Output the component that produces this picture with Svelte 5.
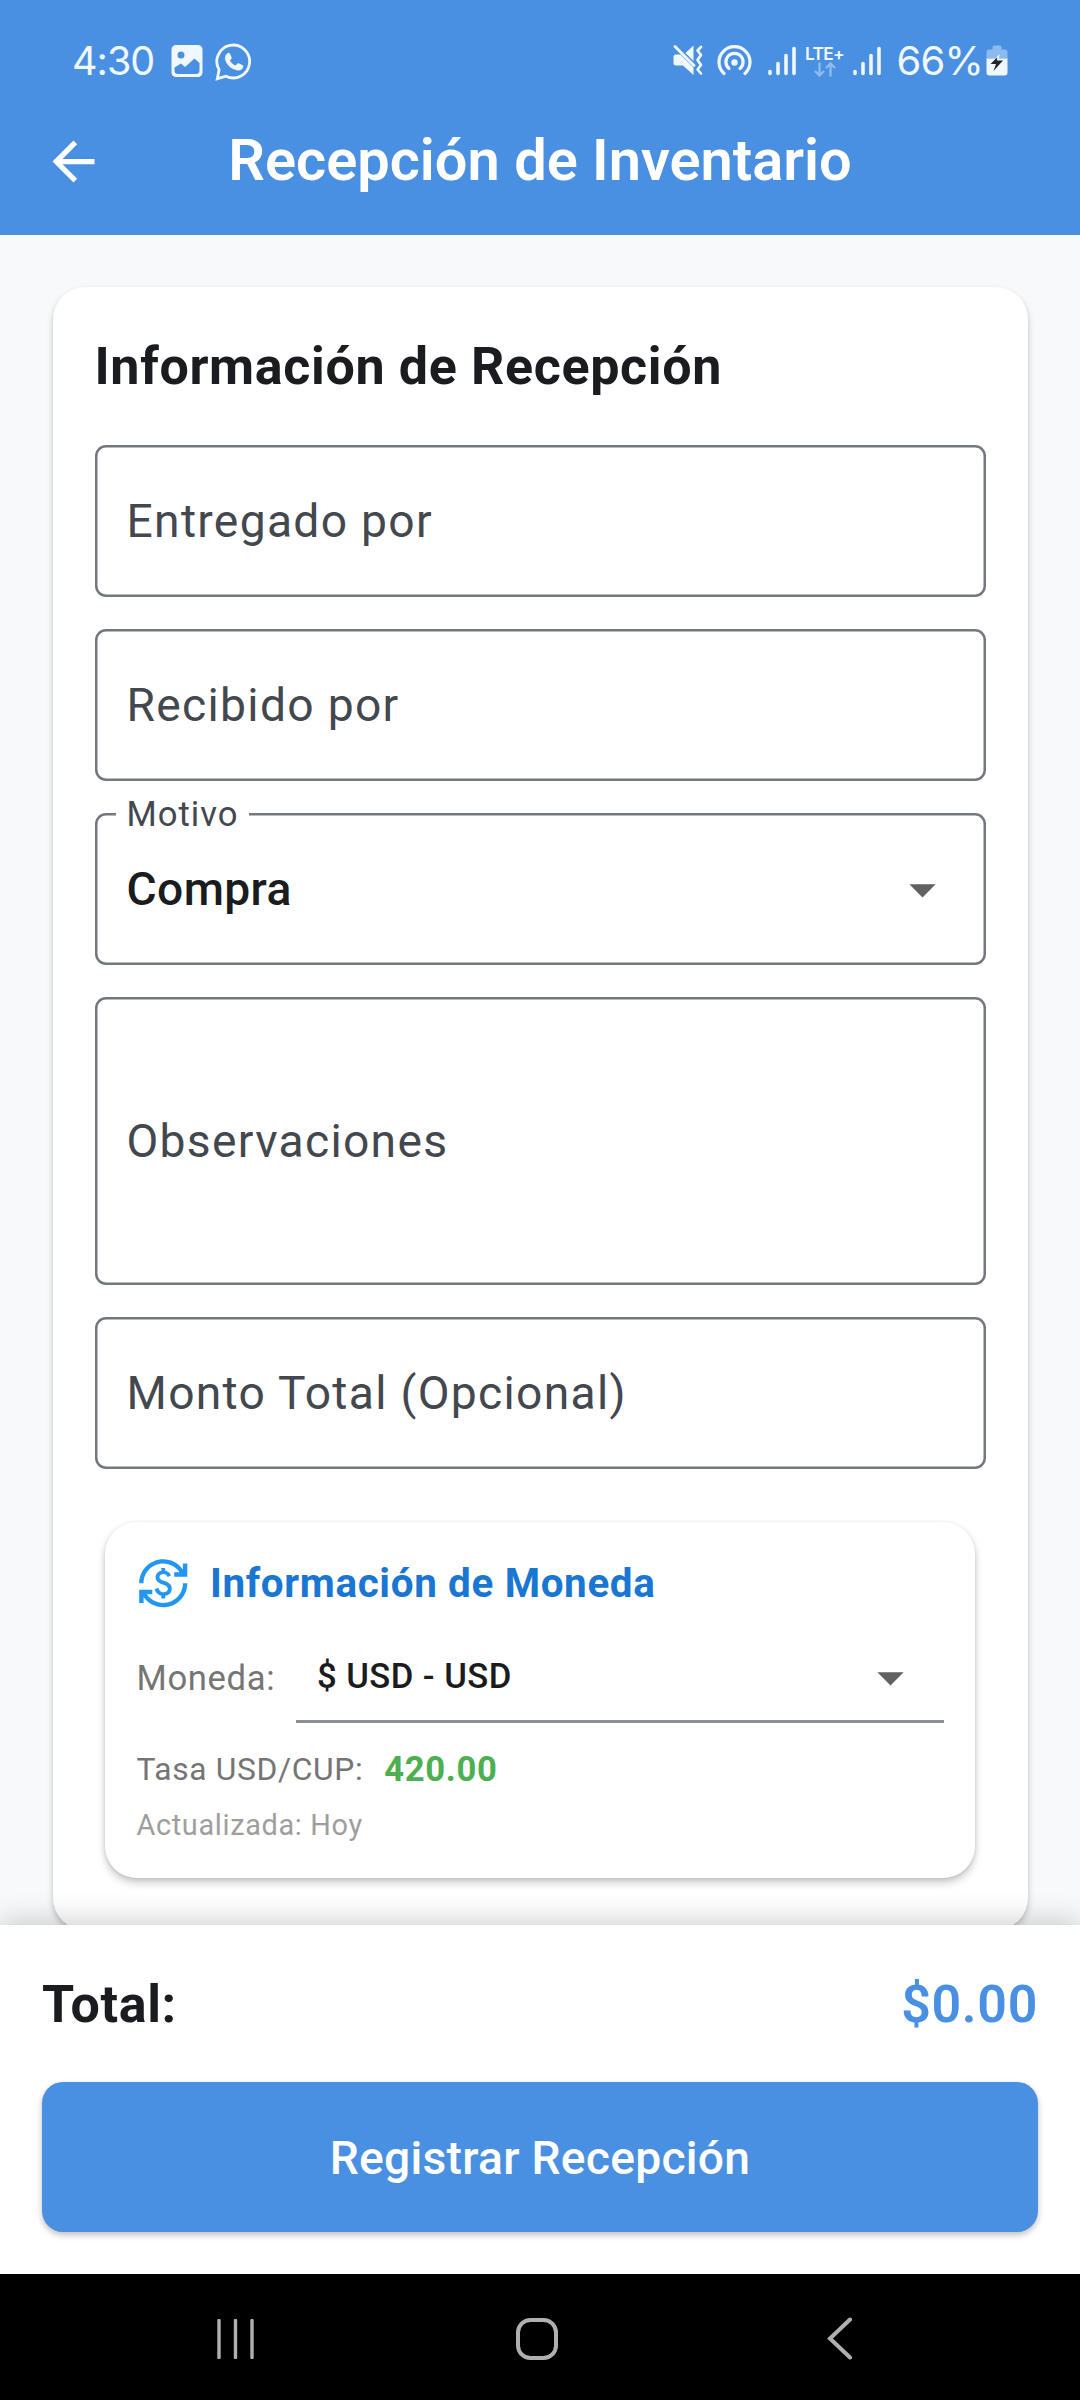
<script>
  const fields = [
    { label: 'Entregado por', kind: 'text' },
    { label: 'Recibido por', kind: 'text' },
    { label: 'Motivo', kind: 'select', value: 'Compra' },
    { label: 'Observaciones', kind: 'area' },
    { label: 'Monto Total (Opcional)', kind: 'text' }
  ];
</script>

{#snippet signal()}
  <svg class="signal" width="28" height="30" viewBox="0 0 28 30">
    <path d="M2 25.500v2M10 17.500v10M18 9.500v18M26 2.500v25" stroke="#f0f7ff" stroke-width="3.600" stroke-linecap="round" />
  </svg>
{/snippet}

{#snippet caret()}
  <svg class="caret" viewBox="0 0 24 24"><path d="M7 10l5 5 5-5z" fill="#616161" /></svg>
{/snippet}

<div class="screen">
  <header>
    <div class="status">
      <span class="clock">4:30</span>
      <svg class="photo" width="32" height="32" viewBox="0 0 32 32">
        <path fill-rule="evenodd" fill="#f0f7ff" d="M5 0h22a4.500 4.500 0 0 1 4.500 4.500v23a4.500 4.500 0 0 1-4.500 4.500h-22a4.500 4.500 0 0 1-4.500-4.500v-23a4.500 4.500 0 0 1 4.500-4.500zM10 6.500a3.500 3.500 0 1 0 0 7a3.500 3.500 0 0 0 0-7zM3.500 22.500v3a3.500 3.500 0 0 0 3.500 3.500h18a3.500 3.500 0 0 0 3.500-3.500v-7.500l-5-4.500-9.500 8.500-4-3.500z" />
      </svg>
      <svg class="whatsapp" width="38" height="39" viewBox="0 0 38 39">
        <path d="M2.300 36.700l1.800-8.900A16.400 16.400 0 1 1 11 34.200z" fill="none" stroke="#f0f7ff" stroke-width="2.800" />
        <path d="M12.200 11.500c.9-.9 2.100-.9 2.700.2l1.600 3.300c.4.900.1 1.600-.5 2.300l-1 1.100c1.200 2.400 3.100 4.200 5.600 5.200l1.500-1.800c.5-.7 1.200-.8 2-.4l3.200 1.600c1 .5 1.200 1.100.9 2.100-.7 2.300-3 3.700-5.600 3.300-6.500-1-12.300-6.600-12.600-12.200-.1-1.900.8-3.400 2.200-4.700z" fill="#f0f7ff" />
      </svg>
      <div class="right">
        <svg class="mute" width="30" height="31" viewBox="0 0 30 31">
          <path d="M2 1.500l19 19" stroke="#f0f7ff" stroke-width="2.800" stroke-linecap="round" />
          <path d="M3 9.500h4.500l13 13v7.500l-10.500-9.500h-7a2.500 2.500 0 0 1-2.500-2.500v-6a2.500 2.500 0 0 1 2.500-2.500zM20.500 .5v15.500l-8-8z" fill="#f0f7ff" />
          <path d="M28 2l-3.500 3.500 3.500 4.500-3.500 5 3.500 5-3.500 4.500 3.500 4" fill="none" stroke="#f0f7ff" stroke-width="2.600" stroke-linecap="round" stroke-linejoin="round" />
        </svg>
        <svg class="hotspot" width="35" height="31" viewBox="0 0 35 31">
          <g fill="none" stroke="#f0f7ff" stroke-width="3.200" stroke-linecap="round">
            <path d="M7 28.500a15.500 15.500 0 1 1 21 0" />
            <path d="M12 23.500a8.600 8.600 0 1 1 11 0" />
          </g>
          <circle cx="17.500" cy="17.500" r="3.200" fill="#f0f7ff" />
        </svg>
        {@render signal()}
        <div class="lte">
          <span>LTE+</span>
          <svg width="22" height="15" viewBox="0 0 22 15">
            <path d="M5.500 .5v13M1 9l4.500 4.500 4.500-4.500M16.500 14.500v-13M12 6l4.500-4.500 4.500 4.500" fill="none" stroke="#8fbdf0" stroke-width="2.300" />
          </svg>
        </div>
        {@render signal()}
        <span class="percent">66%</span>
        <svg class="battery" width="22" height="31" viewBox="0 0 22 31">
          <path d="M6.500 2a1.500 1.500 0 0 1 1.500-1.500h6a1.500 1.500 0 0 1 1.500 1.500v2.500h3.500a2.500 2.500 0 0 1 2.500 2.500v6.500h-21v-6.500a2.500 2.500 0 0 1 2.500-2.500h3.500z" fill="#8cb9ee" />
          <path d="M.5 13.500h21v14a3 3 0 0 1-3 3h-15a3 3 0 0 1-3-3z" fill="#f0f7ff" />
          <path d="M13.500 9l-4 4.500h3.500z" fill="#f0f7ff" />
          <path d="M11 12.500l-6.500 6.500h5.500l-2.500 7 9.500-10.500h-6z" fill="#22252b" />
        </svg>
      </div>
    </div>
    <div class="toolbar">
      <svg class="back" viewBox="0 0 24 24"><path d="M20 11H7.830l5.590-5.590L12 4l-8 8 8 8 1.410-1.410L7.830 13H20v-2z" fill="#fff" /></svg>
      <h1>Recepción de Inventario</h1>
    </div>
  </header>

  <main>
    <section class="card">
      <h2>Información de Recepción</h2>
      <div class="fields">
        {#each fields as field}
          <div class="field {field.kind}">
            {#if field.value}
              <span class="floating">{field.label}</span>
              <span class="value">{field.value}</span>
              {@render caret()}
            {:else}
              <span class="label">{field.label}</span>
            {/if}
          </div>
        {/each}
      </div>

      <div class="currency">
        <div class="currency-head">
          <svg viewBox="0 0 24 24"><path fill="#2196f3" d="M12.890 11.100c-1.780-.59-2.640-.96-2.640-1.900c0-1.020 1.110-1.390 1.810-1.390c1.310 0 1.790 .99 1.900 1.340l1.580-.67c-.15-.44-.82-1.910-2.660-2.230V5h-1.750v1.260c-2.600 .56-2.620 2.850-2.620 2.960c0 2.270 2.250 2.910 3.350 3.310c1.580 .56 2.280 1.070 2.280 2.030c0 1.130-1.050 1.610-1.980 1.610c-1.820 0-2.340-1.870-2.400-2.090L8.100 14.750c.63 2.190 2.280 2.780 3.020 2.960V19h1.750v-1.240c.52-.09 3.020-.59 3.020-3.220C15.900 13.150 15.290 11.930 12.890 11.100zM3 21H1v-6h6v2H4.520c1.610 2.410 4.360 4 7.480 4c4.970 0 9-4.030 9-9h2c0 6.080-4.920 11-11 11c-3.720 0-7.010-1.850-9-4.670V21zM1 12C1 5.920 5.920 1 12 1c3.720 0 7.010 1.850 9 4.670V3h2v6h-6V7h2.480C17.870 4.590 15.120 3 12 3c-4.970 0-9 4.030-9 9H1z" /></svg>
          <h3>Información de Moneda</h3>
        </div>
        <div class="currency-row">
          <span class="key">Moneda:</span>
          <div class="dropdown">
            <span>$ USD - USD</span>
            {@render caret()}
          </div>
        </div>
        <div class="rate"><span>Tasa USD/CUP:</span><strong>420.00</strong></div>
        <div class="updated">Actualizada: Hoy</div>
      </div>
    </section>
  </main>

  <footer>
    <div class="total"><span>Total:</span><strong>$0.00</strong></div>
    <button>Registrar Recepción</button>
  </footer>

  <nav>
    <svg width="40" height="40" viewBox="0 0 40 40"><path d="M3 1.500v37M19.500 1.500v37M36 1.500v37" stroke="#b0b0b0" stroke-width="3.400" stroke-linecap="round" /></svg>
    <svg class="home" width="42" height="42" viewBox="0 0 42 42"><rect x="2" y="2" width="38" height="38" rx="12.500" fill="none" stroke="#b0b0b0" stroke-width="4" /></svg>
    <svg width="26" height="43" viewBox="0 0 26 43"><path d="M23 2.500L3 21.500l20 19" fill="none" stroke="#b0b0b0" stroke-width="4" stroke-linecap="round" /></svg>
  </nav>
</div>

<style>
  :global(body) { margin: 0; background: #f8f9fb; }
  .screen {
    width: 1080px;
    height: 2400px;
    display: flex;
    flex-direction: column;
    overflow: hidden;
    background: #f8f9fb;
    font-family: Roboto, sans-serif;
    color: #1a1c20;
  }
  svg { display: block; flex: none; }
  h1, h2, h3 { margin: 0; }
  span, strong, h1, h2, h3 { white-space: nowrap; }

  header { height: 235px; flex: none; background: #4a90e2; }
  .status {
    height: 88px;
    box-sizing: border-box;
    padding: 33px 72px 0 72px;
    display: flex;
    align-items: center;
    color: #f0f7ff;
    font-family: Inter, Roboto, sans-serif;
  }
  .clock { width: 99px; font-size: 39.500px; letter-spacing: -1px; }
  .whatsapp { margin-left: 12px; margin-top: 1px; }
  .right { margin-left: auto; display: flex; align-items: center; }
  .hotspot { margin-left: 14px; }
  .signal { margin-left: 16px; }
  .lte { margin-left: 10px; width: 38px; display: flex; flex-direction: column; align-items: center; }
  .lte span { font-size: 17.300px; font-weight: 600; line-height: 17px; letter-spacing: -.7px; }
  .lte + .signal { margin-left: 9px; }
  .percent { margin-left: 16px; font-size: 40px; letter-spacing: -.8px; }
  .battery { margin-left: 3px; }

  .toolbar { height: 147px; display: flex; align-items: center; }
  .back { width: 63px; height: 63px; margin-left: 42px; }
  h1 { flex: 1; margin: 0 105px 3px 0; text-align: center; font-size: 57.750px; font-weight: 600; color: #fff; }

  main { height: 1690px; flex: none; padding: 52px 52.500px 0; box-sizing: border-box; }
  .card {
    height: 1643px;
    box-sizing: border-box;
    padding: 42px 42px 0;
    border-radius: 32px;
    background: #fff;
    box-shadow: 0 4px 7px rgba(0, 0, 0, .2), 0 1px 3px rgba(0, 0, 0, .07);
  }
  h2 { height: 74px; line-height: 76px; font-size: 52px; font-weight: 700; letter-spacing: .650px; }
  .fields { display: flex; flex-direction: column; gap: 32px; margin-top: 42px; }
  .field {
    position: relative;
    height: 152px;
    box-sizing: border-box;
    display: flex;
    align-items: center;
    justify-content: space-between;
    padding: 0 32px;
    border-radius: 11px;
    box-shadow: inset 0 0 0 2.500px #73777f;
  }
  .area { height: 288px; }
  .label { font-size: 46.200px; letter-spacing: 1.310px; color: #43474e; }
  .value { font-size: 46.200px; font-weight: 500; letter-spacing: .390px; }
  .floating {
    position: absolute;
    left: 21px;
    top: -20px;
    padding: 0 11px;
    background: #fff;
    font-size: 34.650px;
    line-height: 42px;
    letter-spacing: .980px;
    color: #43474e;
  }
  .caret { width: 63px; height: 63px; }

  .currency {
    height: 356px;
    box-sizing: border-box;
    margin: 53px 10.500px 0;
    padding: 32px 31.500px 0;
    border-radius: 32px;
    box-shadow: 0 5px 9px rgba(0, 0, 0, .2), 0 1px 4px rgba(0, 0, 0, .1);
  }
  .currency-head { height: 58px; display: flex; align-items: center; gap: 21px; }
  .currency-head svg { width: 52.500px; height: 52.500px; }
  h3 { font-size: 40.400px; font-weight: 700; letter-spacing: .650px; color: #1976d2; }
  .currency-row { height: 82px; margin-top: 29px; display: flex; align-items: center; }
  .key { width: 159px; margin-bottom: 8px; font-size: 34.650px; letter-spacing: .650px; color: #757575; }
  .dropdown {
    flex: 1;
    height: 82px;
    box-sizing: border-box;
    padding: 0 21.500px 6px;
    display: flex;
    align-items: center;
    justify-content: space-between;
    border-bottom: 3px solid #8b8e96;
    font-size: 34.650px;
    font-weight: 500;
    letter-spacing: .450px;
  }
  .dropdown span { margin-bottom: 3px; }
  .rate { height: 50px; margin-top: 21px; display: flex; align-items: center; gap: 21px; font-size: 31.760px; letter-spacing: .650px; color: #757575; }
  .rate strong { font-size: 34.650px; color: #4caf50; }
  .updated { margin-top: 11px; line-height: 40px; font-size: 28.900px; letter-spacing: .650px; color: #9e9e9e; }

  footer {
    position: relative;
    height: 349px;
    flex: none;
    box-sizing: border-box;
    padding: 42px 42px 0;
    background: #fff;
    box-shadow: 0 -5px 26px rgba(0, 0, 0, .18);
  }
  .total { height: 74px; display: flex; align-items: center; justify-content: space-between; font-size: 52px; font-weight: 700; letter-spacing: .650px; }
  .total strong { font-weight: 600; color: #4a90e2; }
  button {
    display: block;
    width: 100%;
    height: 150px;
    margin-top: 41px;
    padding: 1px 0 0;
    border: 0;
    border-radius: 21px;
    background: #4a90e2;
    color: #fff;
    font: 500 46.200px Roboto, sans-serif;
    letter-spacing: .260px;
    box-shadow: 0 3px 6px rgba(0, 0, 0, .25);
  }
  nav {
    position: relative;
    flex: 1;
    box-sizing: border-box;
    padding: 3px 227px 0 215.500px;
    display: flex;
    align-items: center;
    justify-content: space-between;
    background: #000;
  }
  .home { margin-right: 9px; }
</style>
